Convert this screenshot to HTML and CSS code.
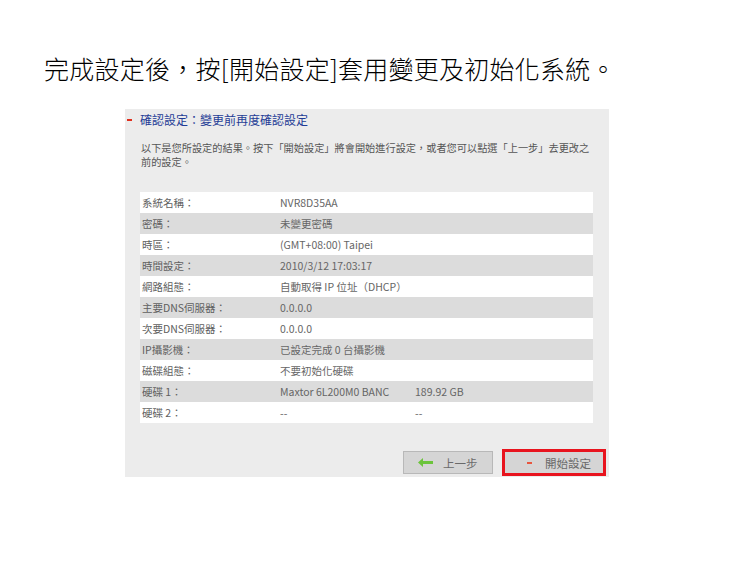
FILE: index.html
```html
<!DOCTYPE html>
<html lang="zh-Hant">
<head>
<meta charset="utf-8">
<title>確認設定</title>
<link rel="stylesheet" href="styles.css">
</head>
<body>
<div class="page">
  <h1 class="heading">完成設定後，按[開始設定]套用變更及初始化系統。</h1>
  <div class="panel">
    <div class="panel-head"><span class="dash"></span><span class="panel-title">確認設定：變更前再度確認設定</span></div>
    <p class="desc">以下是您所設定的結果。按下「開始設定」將會開始進行設定，或者您可以點選「上一步」去更改之<br>前的設定。</p>
    <div class="rows">
      <div class="row"><span>系統名稱：</span><span>NVR8D35AA</span><span></span></div>
      <div class="row alt"><span>密碼：</span><span>未變更密碼</span><span></span></div>
      <div class="row"><span>時區：</span><span>(GMT+08:00) Taipei</span><span></span></div>
      <div class="row alt"><span>時間設定：</span><span>2010/3/12 17:03:17</span><span></span></div>
      <div class="row"><span>網路組態：</span><span>自動取得 IP 位址（DHCP）</span><span></span></div>
      <div class="row alt"><span>主要DNS伺服器：</span><span>0.0.0.0</span><span></span></div>
      <div class="row"><span>次要DNS伺服器：</span><span>0.0.0.0</span><span></span></div>
      <div class="row alt"><span>IP攝影機：</span><span>已設定完成 0 台攝影機</span><span></span></div>
      <div class="row"><span>磁碟組態：</span><span>不要初始化硬碟</span><span></span></div>
      <div class="row alt"><span>硬碟 1：</span><span>Maxtor 6L200M0 BANC</span><span>189.92 GB</span></div>
      <div class="row"><span>硬碟 2：</span><span>--</span><span>--</span></div>
    </div>
    <div class="actions">
      <div class="btn btn-back"><svg class="arrow" width="15" height="9" viewBox="0 0 15 9"><path d="M0 4.5 L5 0 L5 3 L15 3 L15 6 L5 6 L5 9 Z" fill="#6cc43c"/></svg><span>上一步</span></div>
      <div class="btn btn-start"><span class="btn-dash"></span><span>開始設定</span></div>
    </div>
  </div>
</div>
</body>
</html>
```

FILE: styles.css
```css
html, body {
  margin: 0;
  padding: 0;
  background: #ffffff;
}
.page {
  padding: 51px 0 0 44px;
  font-family: "Noto Sans CJK TC", "Noto Sans", sans-serif;
}
.heading {
  margin: 0;
  font-size: 25px;
  font-weight: 300;
  line-height: 34px;
  color: #000;
  letter-spacing: 0.25px;
}
.panel {
  margin: 24px 0 0 81px;
  width: 484px;
  height: 368px;
  box-sizing: border-box;
  background: #ececec;
  padding: 0 16px 0 15px;
  display: flex;
  flex-direction: column;
}
.panel-head {
  height: 22px;
  display: flex;
  align-items: center;
  margin-left: -13px;
}
.dash {
  width: 5px;
  height: 2px;
  background: #e0301e;
  margin-right: 8px;
}
.panel-title {
  font-size: 12px;
  color: #1f3c96;
  line-height: 22px;
}
.desc {
  margin: 10px 0 0 1px;
  font-size: 10.2px;
  line-height: 14px;
  color: #555;
  white-space: nowrap;
}
.rows {
  margin-top: 23px;
  display: flex;
  flex-direction: column;
}
.row {
  height: 21px;
  display: grid;
  grid-template-columns: 138px 135px 1fr;
  align-items: center;
  background: #ffffff;
  font-size: 10.5px;
  color: #666;
  padding-left: 2px;
}
.row.alt {
  background: #dcdcdc;
}
.row span:first-child {
  color: #606060;
}
.actions {
  margin-top: 26px;
  display: flex;
  justify-content: flex-end;
  align-items: center;
  gap: 9px;
  margin-right: -13px;
}
.btn {
  box-sizing: border-box;
  display: flex;
  align-items: center;
  background: #d5d5d5;
  font-size: 11.5px;
  color: #6a6a6a;
}
.btn-back {
  width: 90px;
  height: 23px;
  border: 1px solid #b8b8b8;
  padding-left: 14px;
}
.arrow {
  margin-right: 10px;
}
.btn-start {
  width: 104px;
  height: 27px;
  border: 3px solid #e8141e;
  padding-left: 22px;
}
.btn-dash {
  width: 5px;
  height: 2px;
  background: #e8563e;
  margin-right: 13px;
}
```
